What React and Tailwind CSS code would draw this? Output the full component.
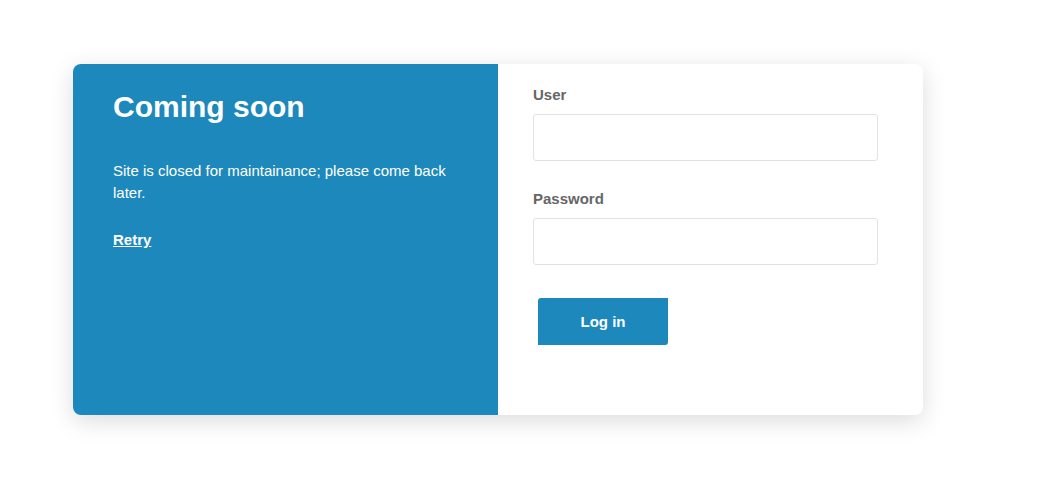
export default function App() {
  return (
    <div className="min-h-[491px] bg-white pt-[64px] pl-[73px]" style={{ fontFamily: '"Liberation Sans", Arial, sans-serif' }}>
      <div className="flex w-[850px] h-[351px] rounded-lg bg-white shadow-[0_6px_24px_rgba(0,0,0,0.14)]">
        {/* Notice panel */}
        <div className="w-[425px] rounded-l-lg bg-[#1d88bb] px-[40px] pt-[25px] text-white">
          <h1 className="text-[30px] font-bold leading-[36px]">Coming soon</h1>
          <p className="mt-[35px] text-[15px] leading-[22px]">
            Site is closed for maintainance; please come back later.
          </p>
          <a href="#" className="mt-[25px] inline-block text-[15px] font-bold leading-[22px] underline">Retry</a>
        </div>
        {/* Login form */}
        <div className="flex-1 pl-[35px] pr-[45px] pt-[22px]">
          <label className="block text-[15px] font-bold leading-[18px] text-[#666]">User</label>
          <input className="mt-[10px] block h-[47px] w-[345px] rounded-[3px] border border-[#e2e2e2] outline-none" />
          <label className="mt-[29px] block text-[15px] font-bold leading-[18px] text-[#666]">Password</label>
          <input type="password" className="mt-[10px] block h-[47px] w-[345px] rounded-[3px] border border-[#e2e2e2] outline-none" />
          <button className="mt-[33px] ml-[5px] block h-[47px] w-[130px] rounded-tl-[3px] rounded-br-[3px] bg-[#1d88bb] pt-[1px] text-[15px] font-bold text-white">Log in</button>
        </div>
      </div>
    </div>
  );
}
